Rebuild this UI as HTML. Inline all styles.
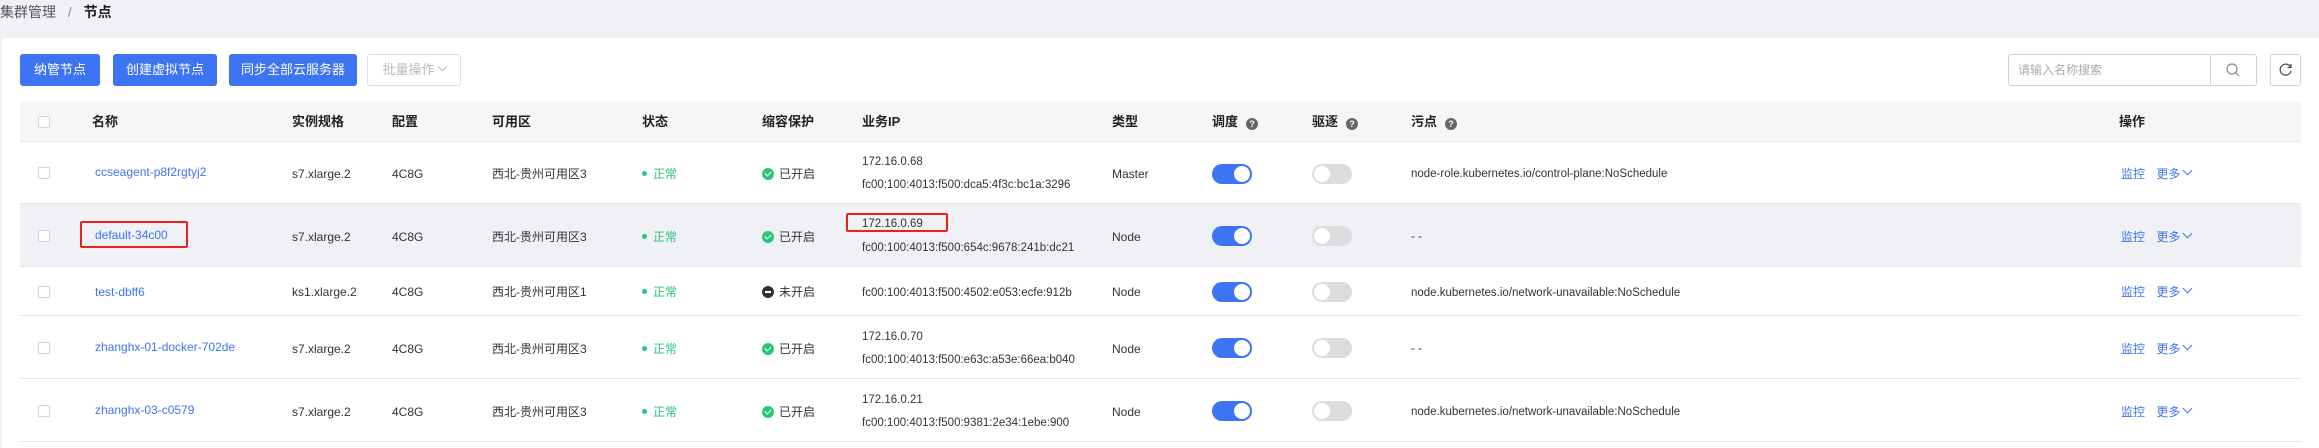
<!DOCTYPE html>
<html><head><meta charset="utf-8"><style>
*{margin:0;padding:0;box-sizing:border-box}
body{width:2319px;height:448px;background:#f0f1f5;font-family:"Liberation Sans","Noto Sans CJK SC",sans-serif;font-size:12px;line-height:16px;color:#333;position:relative;overflow:hidden}
.a{position:absolute;white-space:nowrap;line-height:16px;height:16px}
.card{position:absolute;left:2px;top:38px;width:2317px;height:410px;background:#fff}
.btn{position:absolute;top:54px;height:32px;background:#3d74f5;color:#fff;border-radius:3px;font-size:13px;line-height:32px;text-align:center}
.hd{position:absolute;left:20px;top:102px;width:2281px;height:40px;background:#f5f6f8;border-bottom:1px solid #e4e6eb}
.th{position:absolute;top:114px;font-size:13px;line-height:16px;font-weight:bold;color:#222;white-space:nowrap}
.row{position:absolute;left:20px;width:2281px;border-bottom:1px solid #e4e6eb}
.cb{position:absolute;width:12px;height:12px;border:1px solid #d0d3d9;border-radius:2px;background:#fff}
.q{display:inline-block;width:12px;height:12px;border-radius:50%;background:#666;color:#fff;font-size:9px;line-height:12px;text-align:center;margin-left:8px;vertical-align:-1px}
.lnk{color:#3d74f5}
.ok{color:#2ac47a}
.dot{display:inline-block;width:5px;height:5px;border-radius:50%;background:#2ac47a;margin-right:6px;vertical-align:2px}
.ck{display:inline-block;width:12px;height:12px;border-radius:50%;background:#2ac47a;margin-right:5px;vertical-align:-2px;position:relative}
.ck:after{content:"";position:absolute;left:4px;top:2px;width:3px;height:5px;border:solid #fff;border-width:0 1.5px 1.5px 0;transform:rotate(45deg)}
.off{background:#333}.off:after{left:3px;top:5px;width:6px;height:0;border-width:0 0 2px 0;transform:none}
.ton{position:absolute;width:40px;height:20px;border-radius:10px;background:#3d74f5}
.ton:after{content:"";position:absolute;right:2px;top:2px;width:16px;height:16px;border-radius:50%;background:#fff}
.tof{position:absolute;width:40px;height:20px;border-radius:10px;background:#dcdcdc}
.tof:after{content:"";position:absolute;left:2px;top:2px;width:16px;height:16px;border-radius:50%;background:#fff}
.red{position:absolute;border:2px solid #e8221b;border-radius:2px}
.t{font-size:11.5px}
.chev{display:inline-block;width:7px;height:7px;border:solid currentColor;border-width:0 1px 1px 0;transform:rotate(45deg);margin-left:4px;vertical-align:4px}
</style></head><body>
<div class="a" style="left:0;top:4px;font-size:14px;color:#555">集群管理 <span style="margin:0 8px;color:#888">/</span> <b style="color:#222">节点</b></div>
<div class="card"></div>
<div class="btn" style="left:20px;width:80px">纳管节点</div>
<div class="btn" style="left:113px;width:104px">创建虚拟节点</div>
<div class="btn" style="left:229px;width:128px">同步全部云服务器</div>
<div class="btn" style="left:367px;width:94px;background:#fff;border:1px solid #dcdfe6;color:#bbb;line-height:30px">批量操作<span class="chev"></span></div>
<div class="a" style="left:2008px;top:54px;width:249px;height:32px;border:1px solid #d0d3d9;border-radius:3px"></div>
<div class="a" style="left:2018px;top:62px;color:#aaa;font-size:12px">请输入名称搜索</div>
<div class="a" style="left:2210px;top:55px;width:1px;height:30px;background:#d0d3d9"></div>
<svg class="a" style="left:2225px;top:62px" width="16" height="16" viewBox="0 0 16 16"><circle cx="7" cy="7" r="5" fill="none" stroke="#888" stroke-width="1.2"/><path d="M10.5 10.5L14 14" stroke="#888" stroke-width="1.2"/></svg>
<div class="a" style="left:2270px;top:54px;width:31px;height:32px;border:1px solid #d0d3d9;border-radius:3px"></div>
<svg class="a" style="left:2278px;top:62px" width="16" height="16" viewBox="0 0 16 16"><path d="M12.5 5A5.5 5.5 0 1 0 13 9" fill="none" stroke="#555" stroke-width="1.3"/><path d="M13 2v3.5h-3.5" fill="none" stroke="#555" stroke-width="1.3"/></svg>

<div class="hd"></div>
<div class="cb" style="left:38px;top:116px"></div>
<div class="th" style="left:92px">名称</div>
<div class="th" style="left:292px">实例规格</div>
<div class="th" style="left:392px">配置</div>
<div class="th" style="left:492px">可用区</div>
<div class="th" style="left:642px">状态</div>
<div class="th" style="left:762px">缩容保护</div>
<div class="th" style="left:862px">业务IP</div>
<div class="th" style="left:1112px">类型</div>
<div class="th" style="left:1212px">调度<span class="q">?</span></div>
<div class="th" style="left:1312px">驱逐<span class="q">?</span></div>
<div class="th" style="left:1411px">污点<span class="q">?</span></div>
<div class="th" style="left:2119px">操作</div>

<div class="row" style="top:142px;height:62px"></div>
<div class="row" style="top:204px;height:63px;background:#f0f1f5"></div>
<div class="row" style="top:267px;height:49px"></div>
<div class="row" style="top:316px;height:63px"></div>
<div class="row" style="top:379px;height:63px"></div>

<!-- row1 -->
<div class="cb" style="left:38px;top:167px"></div>
<div class="a lnk" style="left:95px;top:164px">ccseagent-p8f2rgtyj2</div>
<div class="a" style="left:292px;top:166px">s7.xlarge.2</div>
<div class="a" style="left:392px;top:166px">4C8G</div>
<div class="a" style="left:492px;top:166px">西北-贵州可用区3</div>
<div class="a ok" style="left:642px;top:166px"><span class="dot"></span>正常</div>
<div class="a" style="left:762px;top:166px"><span class="ck"></span>已开启</div>
<div class="a t" style="left:862px;top:154px">172.16.0.68</div>
<div class="a t" style="left:862px;top:177px">fc00:100:4013:f500:dca5:4f3c:bc1a:3296</div>
<div class="a" style="left:1112px;top:166px">Master</div>
<div class="ton" style="left:1212px;top:164px"></div>
<div class="tof" style="left:1312px;top:164px"></div>
<div class="a t" style="left:1411px;top:166px">node-role.kubernetes.io/control-plane:NoSchedule</div>
<div class="a lnk" style="left:2121px;top:166px">监控 <span style="margin-left:8px">更多</span><span class="chev"></span></div>

<!-- row2 -->
<div class="cb" style="left:38px;top:230px"></div>
<div class="a lnk" style="left:95px;top:227px">default-34c00</div>
<div class="a" style="left:292px;top:229px">s7.xlarge.2</div>
<div class="a" style="left:392px;top:229px">4C8G</div>
<div class="a" style="left:492px;top:229px">西北-贵州可用区3</div>
<div class="a ok" style="left:642px;top:229px"><span class="dot"></span>正常</div>
<div class="a" style="left:762px;top:229px"><span class="ck"></span>已开启</div>
<div class="a t" style="left:862px;top:216px">172.16.0.69</div>
<div class="a t" style="left:862px;top:240px">fc00:100:4013:f500:654c:9678:241b:dc21</div>
<div class="a" style="left:1112px;top:229px">Node</div>
<div class="ton" style="left:1212px;top:226px"></div>
<div class="tof" style="left:1312px;top:226px"></div>
<div class="a t" style="left:1411px;top:229px">- -</div>
<div class="a lnk" style="left:2121px;top:229px">监控 <span style="margin-left:8px">更多</span><span class="chev"></span></div>
<div class="red" style="left:80px;top:221px;width:108px;height:27px"></div>
<div class="red" style="left:846px;top:213px;width:102px;height:19px"></div>

<!-- row3 -->
<div class="cb" style="left:38px;top:286px"></div>
<div class="a lnk" style="left:95px;top:284px">test-dbff6</div>
<div class="a" style="left:292px;top:284px">ks1.xlarge.2</div>
<div class="a" style="left:392px;top:284px">4C8G</div>
<div class="a" style="left:492px;top:284px">西北-贵州可用区1</div>
<div class="a ok" style="left:642px;top:284px"><span class="dot"></span>正常</div>
<div class="a" style="left:762px;top:284px"><span class="ck off"></span>未开启</div>
<div class="a t" style="left:862px;top:285px">fc00:100:4013:f500:4502:e053:ecfe:912b</div>
<div class="a" style="left:1112px;top:284px">Node</div>
<div class="ton" style="left:1212px;top:282px"></div>
<div class="tof" style="left:1312px;top:282px"></div>
<div class="a t" style="left:1411px;top:285px">node.kubernetes.io/network-unavailable:NoSchedule</div>
<div class="a lnk" style="left:2121px;top:284px">监控 <span style="margin-left:8px">更多</span><span class="chev"></span></div>

<!-- row4 -->
<div class="cb" style="left:38px;top:342px"></div>
<div class="a lnk" style="left:95px;top:339px">zhanghx-01-docker-702de</div>
<div class="a" style="left:292px;top:341px">s7.xlarge.2</div>
<div class="a" style="left:392px;top:341px">4C8G</div>
<div class="a" style="left:492px;top:341px">西北-贵州可用区3</div>
<div class="a ok" style="left:642px;top:341px"><span class="dot"></span>正常</div>
<div class="a" style="left:762px;top:341px"><span class="ck"></span>已开启</div>
<div class="a t" style="left:862px;top:329px">172.16.0.70</div>
<div class="a t" style="left:862px;top:352px">fc00:100:4013:f500:e63c:a53e:66ea:b040</div>
<div class="a" style="left:1112px;top:341px">Node</div>
<div class="ton" style="left:1212px;top:338px"></div>
<div class="tof" style="left:1312px;top:338px"></div>
<div class="a t" style="left:1411px;top:341px">- -</div>
<div class="a lnk" style="left:2121px;top:341px">监控 <span style="margin-left:8px">更多</span><span class="chev"></span></div>

<!-- row5 -->
<div class="cb" style="left:38px;top:405px"></div>
<div class="a lnk" style="left:95px;top:402px">zhanghx-03-c0579</div>
<div class="a" style="left:292px;top:404px">s7.xlarge.2</div>
<div class="a" style="left:392px;top:404px">4C8G</div>
<div class="a" style="left:492px;top:404px">西北-贵州可用区3</div>
<div class="a ok" style="left:642px;top:404px"><span class="dot"></span>正常</div>
<div class="a" style="left:762px;top:404px"><span class="ck"></span>已开启</div>
<div class="a t" style="left:862px;top:392px">172.16.0.21</div>
<div class="a t" style="left:862px;top:415px">fc00:100:4013:f500:9381:2e34:1ebe:900</div>
<div class="a" style="left:1112px;top:404px">Node</div>
<div class="ton" style="left:1212px;top:401px"></div>
<div class="tof" style="left:1312px;top:401px"></div>
<div class="a t" style="left:1411px;top:404px">node.kubernetes.io/network-unavailable:NoSchedule</div>
<div class="a lnk" style="left:2121px;top:404px">监控 <span style="margin-left:8px">更多</span><span class="chev"></span></div>
</body></html>
